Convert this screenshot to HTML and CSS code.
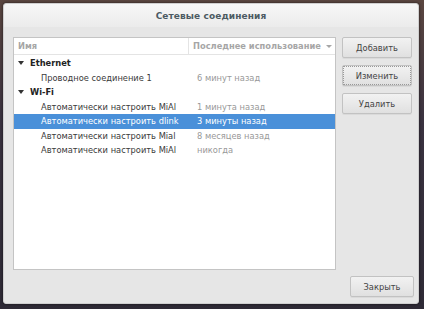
FILE: index.html
```html
<!DOCTYPE html>
<html>
<head>
<meta charset="utf-8">
<link rel="stylesheet" href="styles.css">
</head>
<body>
<div class="dialog">
  <div class="titlebar">Сетевые соединения</div>
  <div class="content">
    <div class="main">
      <div class="tree">
        <div class="head">
          <div class="hcol c1">Имя</div>
          <div class="hcol c2">Последнее использование <span class="sort"></span></div>
        </div>
        <div class="rows">
          <div class="row group"><span class="exp"></span>Ethernet</div>
          <div class="row"><span class="c1 name">Проводное соединение 1</span><span class="c2 time">6 минут назад</span></div>
          <div class="row group"><span class="exp"></span>Wi-Fi</div>
          <div class="row"><span class="c1 name">Автоматически настроить MiAl</span><span class="c2 time">1 минута назад</span></div>
          <div class="row sel"><span class="c1 name">Автоматически настроить dlink</span><span class="c2 time">3 минуты назад</span></div>
          <div class="row"><span class="c1 name">Автоматически настроить Mial</span><span class="c2 time">8 месяцев назад</span></div>
          <div class="row"><span class="c1 name">Автоматически настроить MiAl</span><span class="c2 time">никогда</span></div>
        </div>
      </div>
      <div class="side">
        <button class="btn">Добавить</button>
        <button class="btn focus">Изменить</button>
        <button class="btn">Удалить</button>
      </div>
    </div>
    <div class="footer">
      <button class="btn close">Закрыть</button>
    </div>
  </div>
</div>
</body>
</html>
```
FILE: styles.css
```css
html, body {
  margin: 0;
  padding: 0;
}
body {
  width: 424px;
  height: 309px;
  overflow: hidden;
  background: linear-gradient(180deg, #5a4640 0%, #3a3240 40%, #2e2a36 100%);
  font-family: "DejaVu Sans", sans-serif;
}
.dialog {
  margin: 3px 0 0 3px;
  width: 416px;
  height: 301px;
  background: #e6e6e6;
  border-radius: 3px;
  box-shadow: 0 0 3px rgba(0,0,0,0.6);
  display: flex;
  flex-direction: column;
  box-sizing: border-box;
  border: 1px solid #cfcfcf;
}
.titlebar {
  height: 23px;
  flex: none;
  background: linear-gradient(180deg, #f7f7f7, #ebebeb);
  color: #4c5a62;
  font-weight: bold;
  font-size: 9px;
  letter-spacing: 0.1px;
  display: flex;
  align-items: center;
  justify-content: center;
  border-radius: 3px 3px 0 0;
}
.content {
  flex: 1;
  display: flex;
  flex-direction: column;
  padding: 10px 6px 6px 9px;
}
.main {
  flex: 1;
  display: flex;
  gap: 6px;
}
.tree {
  width: 323px;
  height: 233px;
  background: #fff;
  border: 1px solid #c4c4c4;
  box-sizing: border-box;
}
.head {
  display: flex;
  height: 16px;
  border-bottom: 1px solid #e4e4e4;
  font-size: 8.3px;
  font-weight: bold;
  color: #a6a6a6;
  white-space: nowrap;
}
.hcol {
  display: flex;
  align-items: center;
}
.head .c1 {
  width: 170px;
  flex: none;
  padding-left: 4px;
  border-right: 1px solid #e4e4e4;
}
.head .c2 {
  flex: 1;
  padding-left: 4px;
}
.sort {
  width: 0;
  height: 0;
  border-left: 3px solid transparent;
  border-right: 3px solid transparent;
  border-top: 3px solid #a6a6a6;
  margin-left: 5px;
}
.rows {
  padding-top: 1px;
}
.row {
  height: 14.5px;
  display: flex;
  align-items: center;
  font-size: 8.3px;
  color: #3a3a3a;
  white-space: nowrap;
}
.row.group {
  font-weight: bold;
  color: #222;
}
.exp {
  width: 0;
  height: 0;
  border-left: 3.5px solid transparent;
  border-right: 3.5px solid transparent;
  border-top: 4px solid #333;
  margin-left: 4px;
  margin-right: 6px;
}
.row .c1 {
  width: 152px;
  padding-left: 27px;
  flex: none;
}
.row .c2 {
  padding-left: 4px;
}
.time {
  color: #999;
}
.row.sel {
  background: #4a90d9;
}
.row.sel .name, .row.sel .time {
  color: #fff;
}
.side {
  display: flex;
  flex-direction: column;
  gap: 7px;
}
.btn {
  width: 70px;
  height: 21px;
  font-family: "DejaVu Sans", sans-serif;
  font-size: 8.3px;
  color: #444;
  background: linear-gradient(180deg, #f2f2f2, #e0e0e0);
  border: 1px solid #c2c2c2;
  border-radius: 2px;
  padding: 0;
  box-shadow: 0 1px 0 rgba(0,0,0,0.05);
}
.btn.focus {
  outline: 1px dotted #999;
  outline-offset: -2px;
}
.footer {
  display: flex;
  justify-content: flex-end;
  padding-top: 6px;
}
.btn.close {
  width: 64px;
  margin-right: -2px;
}
```
